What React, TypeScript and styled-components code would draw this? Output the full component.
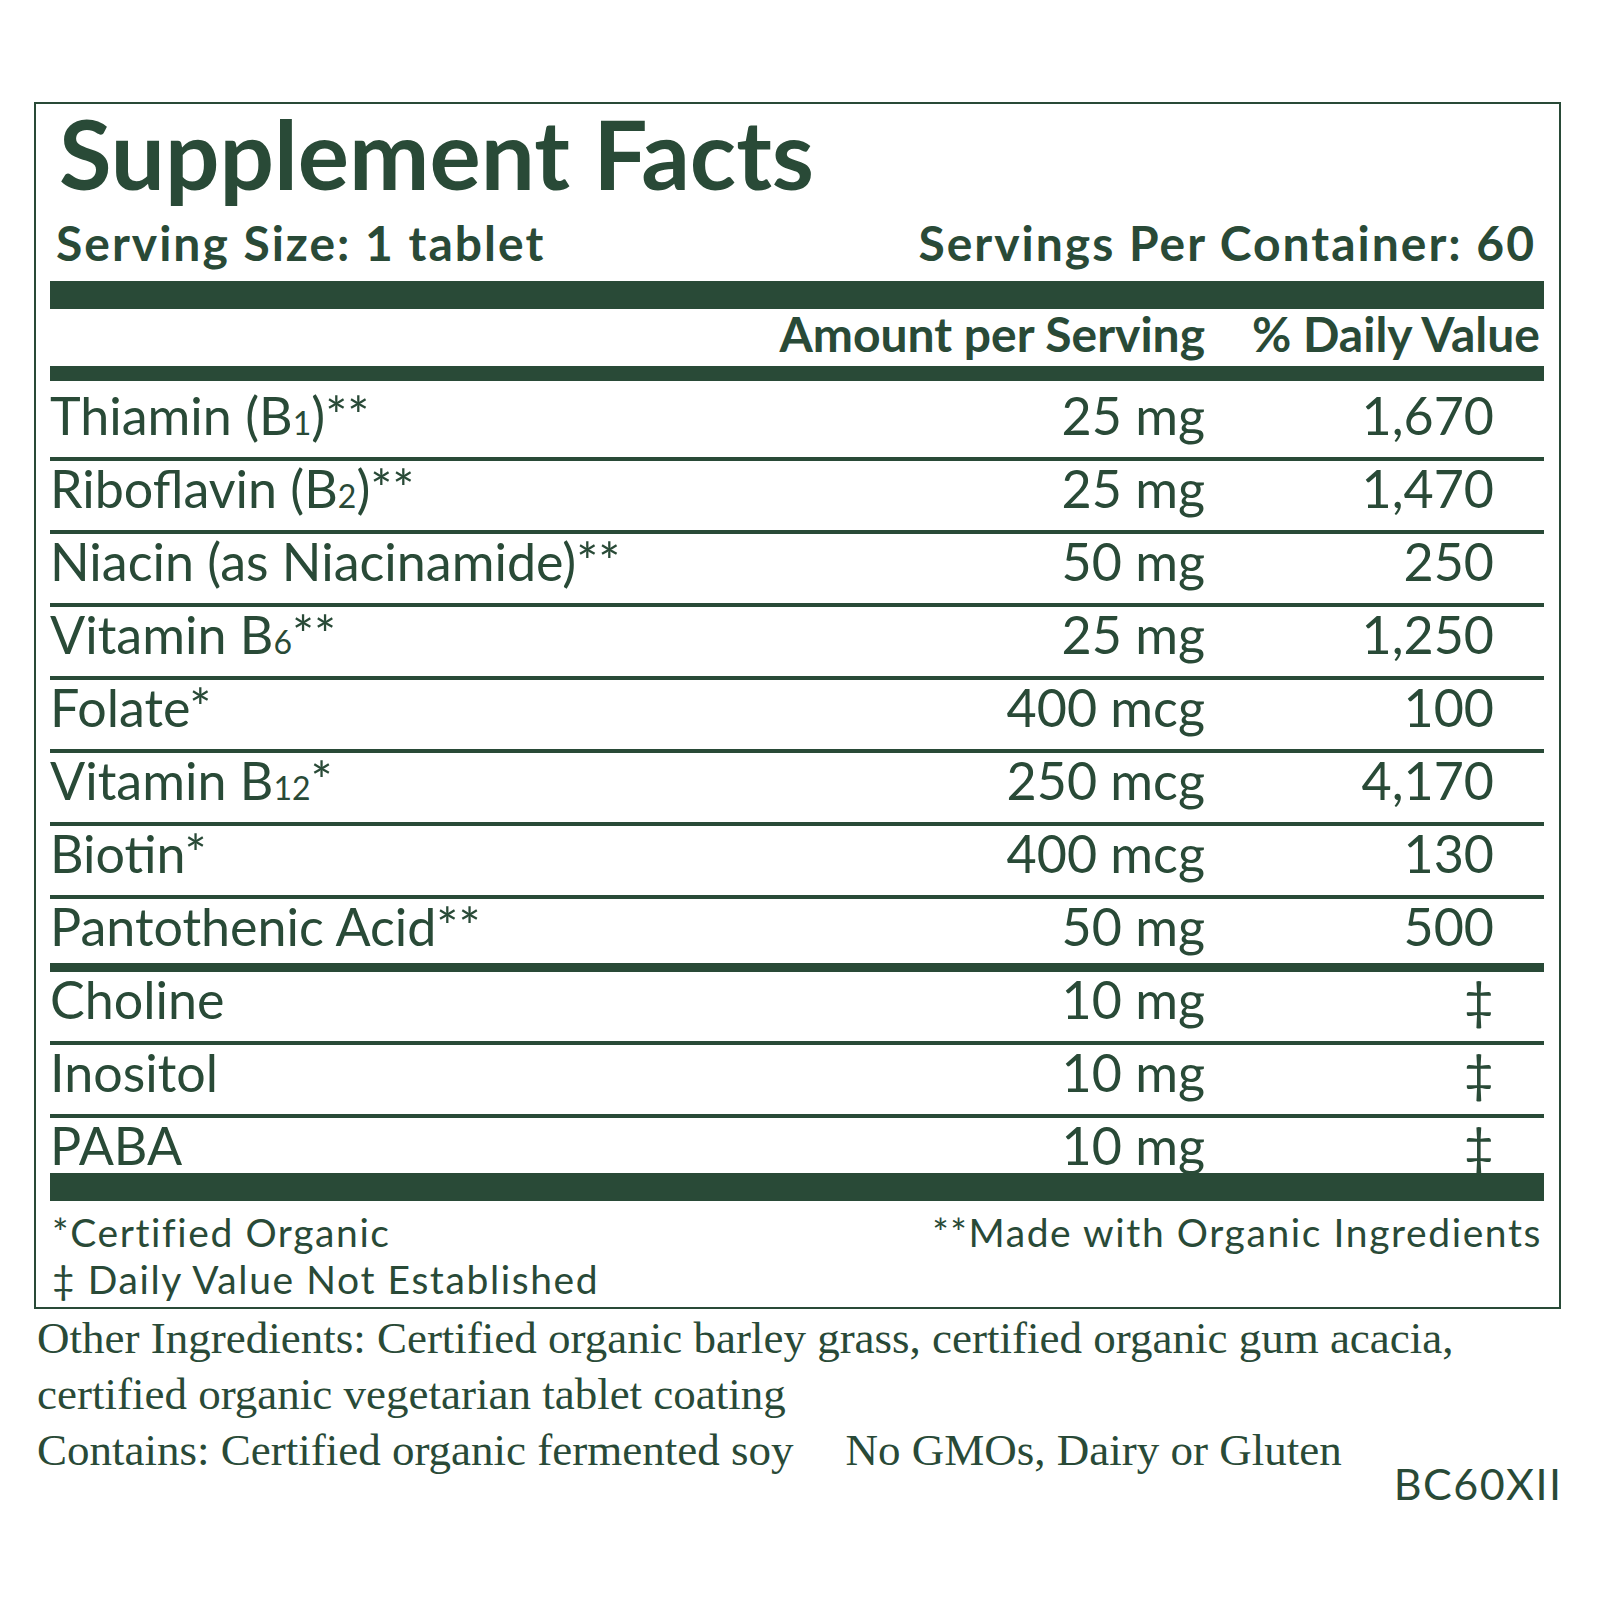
import styled, { createGlobalStyle } from "styled-components";

const GREEN = "#294a37";

const GlobalStyle = createGlobalStyle`
  body {
    margin: 0;
    background: #fff;
    color: ${GREEN};
    font-family: Lato, "Open Sans", sans-serif;
  }
`;

type Nutrient = {
  name: React.ReactNode;
  amount: string;
  dv: string;
  heavy?: boolean;
};

const Page = styled.div`
  width: 1600px;
  padding: 102px 39px 0 34px;
  box-sizing: border-box;
`;

const Panel = styled.section`
  width: 1527px;
  border: 2px solid ${GREEN};
  padding: 0 15px 0 14px;
  box-sizing: border-box;
`;

const Title = styled.h1`
  margin: 0;
  padding: 1px 0 0 9px;
  font-size: 96px;
  line-height: 96px;
  font-weight: 700;
`;

const ServingLine = styled.div`
  display: flex;
  justify-content: space-between;
  margin: 18px 0 14px;
  padding: 0 8px 0 6px;
  font-size: 48px;
  line-height: 48px;
  font-weight: 700;
  letter-spacing: 2px;
`;

const Bar = styled.div<{ $h: number }>`
  height: ${({ $h }) => $h}px;
  background: ${GREEN};
`;

const Columns = styled.div`
  display: grid;
  grid-template-columns: 1fr 440px 339px;
`;

const HeaderRow = styled(Columns)`
  height: 57px;
  padding-top: 1px;
  box-sizing: border-box;
  font-size: 48px;
  line-height: 1;
  font-weight: 700;
`;

const HeadCell = styled.div<{ $pad?: number }>`
  text-align: right;
  white-space: nowrap;
  padding-right: ${({ $pad }) => $pad ?? 0}px;
`;

const Rows = styled.div`
  padding-top: 7px;
`;

const Row = styled(Columns)<{ $heavy?: boolean }>`
  height: 73px;
  box-sizing: border-box;
  padding-top: 1px;
  border-bottom: ${({ $heavy }) => ($heavy ? 9 : 4)}px solid ${GREEN};
  font-size: 52px;
  line-height: 1;

  &:last-child {
    height: 55px;
    border-bottom: none;
  }
`;

const Name = styled.div`
  white-space: nowrap;
`;

const Num = styled.div<{ $pad?: number }>`
  text-align: right;
  white-space: nowrap;
  padding-right: ${({ $pad }) => $pad ?? 0}px;
`;

const Sub = styled.span`
  font-size: 32px;
`;

const Notes = styled.div`
  display: flex;
  justify-content: space-between;
  margin-top: 8px;
  padding: 0 2px 4px 2px;
  font-size: 39px;
  line-height: 47px;
  letter-spacing: 1.6px;
`;

const Ingredients = styled.div`
  padding: 1px 1px 0 3px;
  font-family: "Liberation Serif", "Times New Roman", serif;
  font-size: 45px;
  line-height: 56px;
`;

const Line = styled.div`
  white-space: nowrap;
`;

const LastLine = styled.div`
  display: flex;
  align-items: flex-start;
  gap: 52px;
  white-space: nowrap;
`;

const Code = styled.div`
  margin: 40px 0 0 auto;
  font-family: Lato, "Open Sans", sans-serif;
  font-size: 43px;
  line-height: 1;
  letter-spacing: 1.5px;
`;

const nutrients: Nutrient[] = [
  { name: <>Thiamin (B<Sub>1</Sub>)**</>, amount: "25 mg", dv: "1,670" },
  { name: <>Riboflavin (B<Sub>2</Sub>)**</>, amount: "25 mg", dv: "1,470" },
  { name: "Niacin (as Niacinamide)**", amount: "50 mg", dv: "250" },
  { name: <>Vitamin B<Sub>6</Sub>**</>, amount: "25 mg", dv: "1,250" },
  { name: "Folate*", amount: "400 mcg", dv: "100" },
  { name: <>Vitamin B<Sub>12</Sub>*</>, amount: "250 mcg", dv: "4,170" },
  { name: "Biotin*", amount: "400 mcg", dv: "130" },
  { name: "Pantothenic Acid**", amount: "50 mg", dv: "500", heavy: true },
  { name: "Choline", amount: "10 mg", dv: "‡" },
  { name: "Inositol", amount: "10 mg", dv: "‡" },
  { name: "PABA", amount: "10 mg", dv: "‡" },
];

export default function App() {
  return (
    <>
      <GlobalStyle />
      <Page>
        <Panel>
          <Title>Supplement Facts</Title>
          <ServingLine>
            <span>Serving Size: 1 tablet</span>
            <span>Servings Per Container: 60</span>
          </ServingLine>
          <Bar $h={28} />
          <HeaderRow>
            <div />
            <HeadCell>Amount per Serving</HeadCell>
            <HeadCell $pad={4}>% Daily Value</HeadCell>
          </HeaderRow>
          <Bar $h={15} />
          <Rows>
            {nutrients.map((n, i) => (
              <Row key={i} $heavy={n.heavy}>
                <Name>{n.name}</Name>
                <Num>{n.amount}</Num>
                <Num $pad={50}>{n.dv}</Num>
              </Row>
            ))}
          </Rows>
          <Bar $h={28} />
          <Notes>
            <div>
              *Certified Organic
              <br />‡ Daily Value Not Established
            </div>
            <div>**Made with Organic Ingredients</div>
          </Notes>
        </Panel>
        <Ingredients>
          <Line>
            Other Ingredients: Certified organic barley grass, certified organic gum acacia,
          </Line>
          <Line>certified organic vegetarian tablet coating</Line>
          <LastLine>
            <span>Contains: Certified organic fermented soy</span>
            <span>No GMOs, Dairy or Gluten</span>
            <Code>BC60XII</Code>
          </LastLine>
        </Ingredients>
      </Page>
    </>
  );
}
